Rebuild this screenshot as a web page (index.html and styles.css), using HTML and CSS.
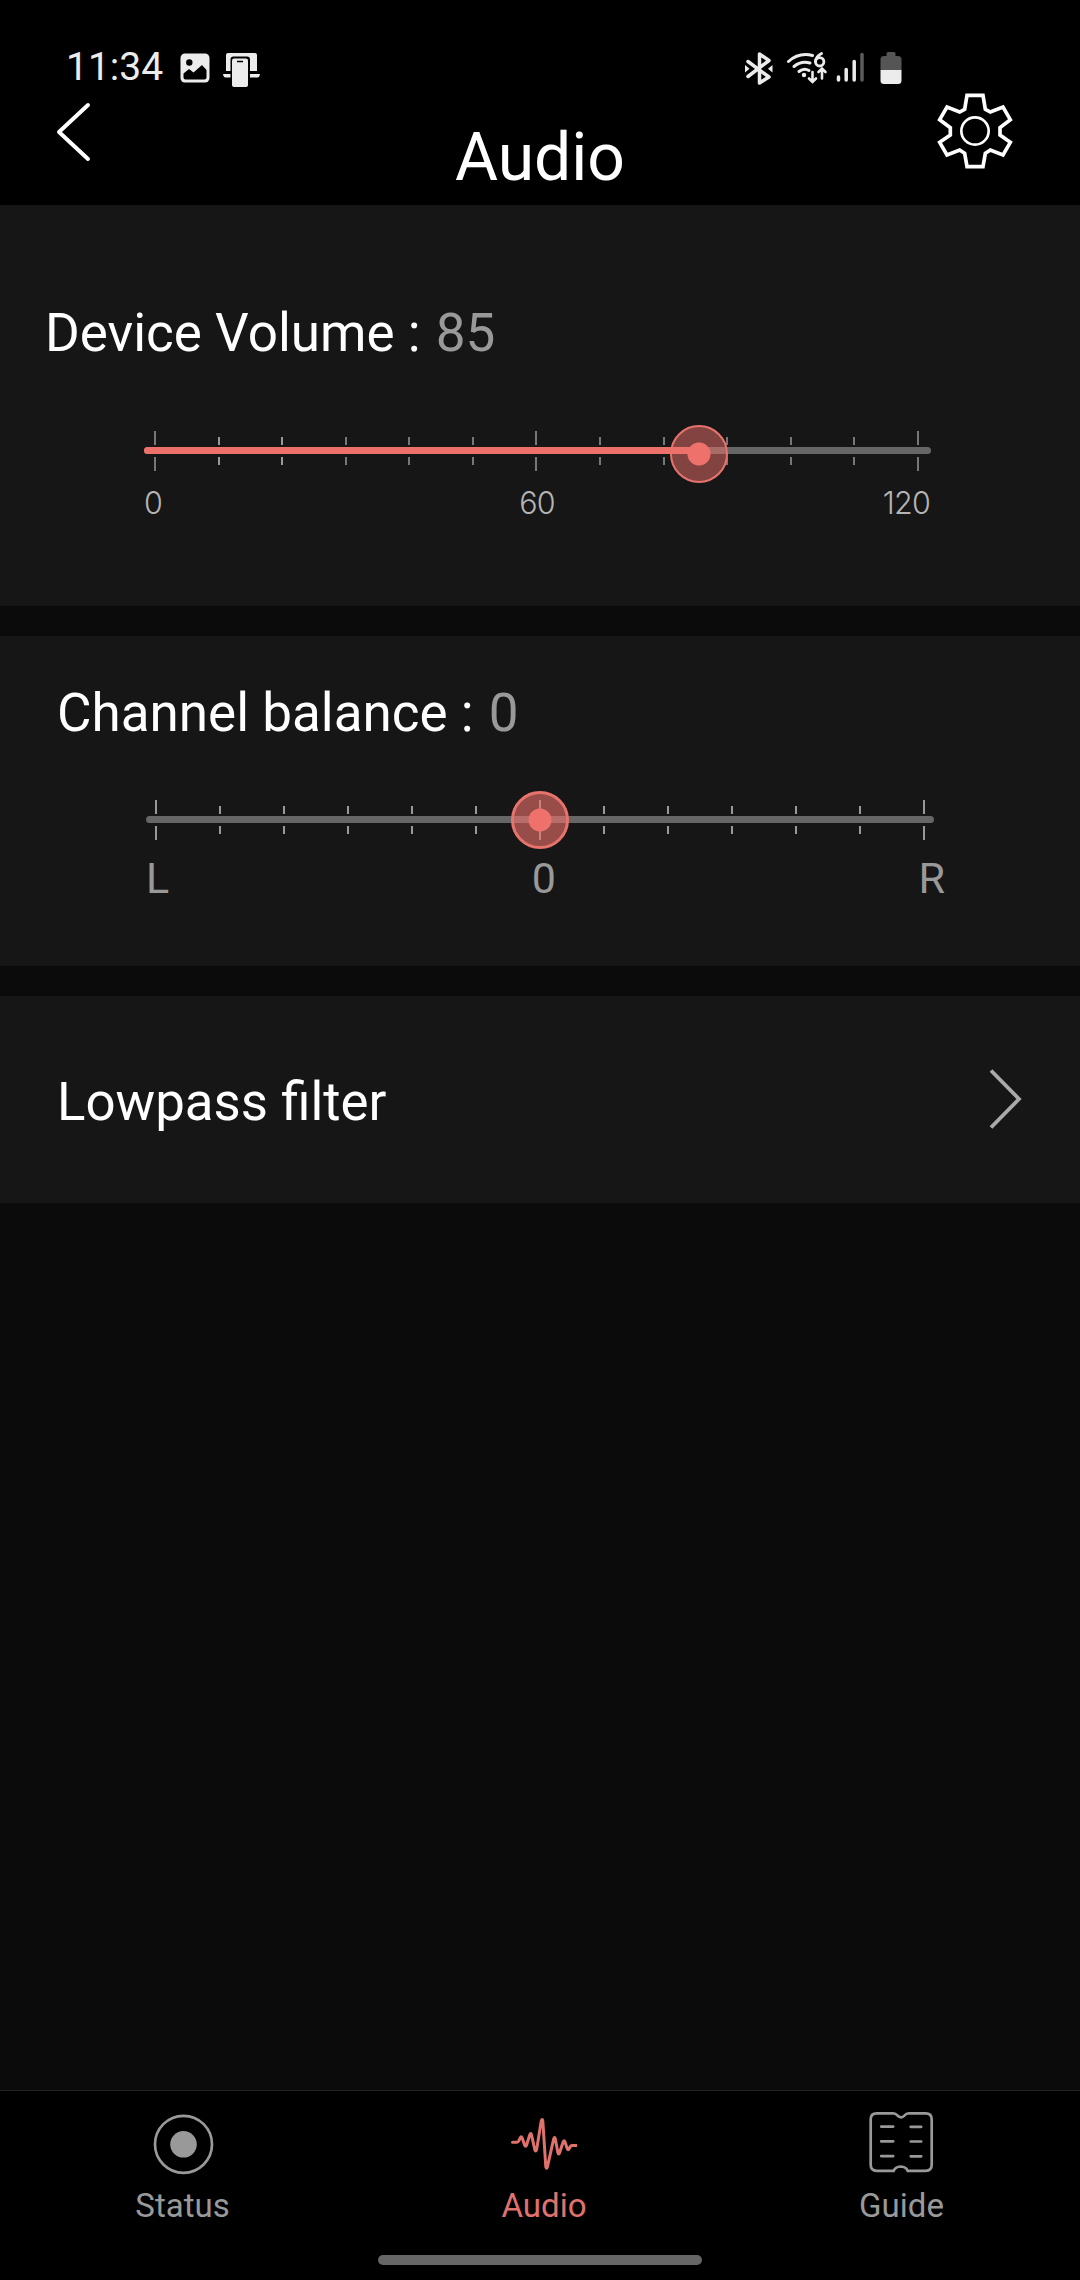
FILE: index.html
```html
<!DOCTYPE html>
<html lang="en">
<head>
    <meta charset="UTF-8">
    <meta name="viewport" content="width=device-width, initial-scale=1.0">
    <title>Audio</title>
    <link rel="stylesheet" href="styles.css">
</head>
<body>
    <header class="header">
        <div class="status-bar">
            <span class="time">11:34</span>
            <svg class="icon-image" width="30" height="30" viewBox="0 0 30 30">
                <rect x="0.5" y="0.5" width="29" height="29" rx="4.5" fill="#ececec"/>
                <circle cx="9.3" cy="9.5" r="3.2" fill="#000"/>
                <path d="M3.5 20.5L9 16l4.500 3.500L22 12l4.500 5v7.500q0 2-2 2h-19q-2 0-2-2z" fill="#000"/>
            </svg>
            <svg class="icon-link" width="38" height="36" viewBox="0 0 38 36">
                <path d="M3 19V3q0-2 2-2h27q2 0 2 2v16h-8V6H9v13z" fill="#ececec"/>
                <path d="M0 22h9v3.500H2.500q-2 0-2.500-3.500zM27 22h10q-.5 3.500-2.500 3.500H27z" fill="#ececec"/>
                <rect x="7.500" y="4.500" width="19.500" height="31.500" rx="3" fill="#000"/>
                <rect x="9" y="6.500" width="16" height="28.500" rx="2" fill="#ececec"/>
                <path d="M14 9.500h6" stroke="#000" stroke-width="1.500"/>
            </svg>
            <div class="signals">
                <svg width="30" height="34" viewBox="0 0 30 34">
                    <path d="M4 9.500L25 25 15.500 31V2L25 8.500 4 24.500" fill="none" stroke="#ececec" stroke-width="3.500" stroke-linejoin="round" stroke-linecap="round"/>
                    <path d="M1 13L5.500 16.800 1 20.500zM28.500 13L24 16.800l4.500 3.700z" fill="#ececec"/>
                </svg>
                <svg class="icon-wifi" width="42" height="34" viewBox="0 0 42 34">
                    <g fill="none" stroke="#ececec" stroke-width="3" stroke-linecap="round">
                        <path d="M2.500 9.500Q13 0 26.500 3.500"/>
                        <path d="M8 14.500Q15 8.500 24 11"/>
                        <path d="M13 19.500q5-4 10-1"/>
                        <path d="M26.500 20v9.500M23 26.500l3.500 3.500 3.500-3.500M36 26.500V17M32.500 20l3.500-3.500L39.500 20" stroke-width="2.600"/>
                        <path d="M35.500 1.500q-6 3-6 8.500" stroke-width="2.800"/>
                        <circle cx="33.700" cy="9.800" r="4.200" stroke-width="2.800"/>
                    </g>
                    <circle cx="18" cy="23" r="2.200" fill="#ececec"/>
                </svg>
                <svg class="icon-cell" width="30" height="34" viewBox="0 0 30 34" fill="none" stroke="#ececec" stroke-width="3.500" stroke-linecap="round">
                    <path d="M2.500 25v3M10.200 17.500v10.500M18.200 9.500v18.500"/>
                    <path d="M26 2.500v25.500" stroke="#5c5c5c"/>
                </svg>
                <svg class="icon-battery" width="22" height="34" viewBox="0 0 22 34">
                    <path d="M6.500 1.500q0-1.500 1.500-1.500h6q1.500 0 1.500 1.500V4H18q3.500 0 3.500 3.500V18H.5V7.500Q.5 4 4 4h2.500z" fill="#555"/>
                    <path d="M.5 18h21v10.500q0 3.500-3.500 3.500H4q-3.500 0-3.500-3.500z" fill="#ececec"/>
                </svg>
            </div>
        </div>
        <div class="title-bar">
            <svg class="back" width="36" height="60" viewBox="0 0 36 60">
                <path d="M32 3L3 30l29 27" fill="none" stroke="#fff" stroke-width="4" stroke-linecap="round" stroke-linejoin="round"/>
            </svg>
            <h1 class="title">Audio</h1>
            <svg class="gear" width="76" height="76" viewBox="0 0 228 228" fill="none" stroke="#fff">
                <path stroke-width="11" d="M90 7h48l7 42 15 8 38-15 22 38-31 24v22l31 22-22 38-38-15-15 10-7 40H90l-7-40-15-10-38 15-22-38 32-22v-22L8 80l22-38 38 15 15-8z"/>
                <circle cx="114" cy="114" r="41" stroke-width="8"/>
            </svg>
        </div>
    </header>

    <main class="content">
        <section class="card card-volume">
            <h2 class="label">Device Volume : <span class="value">85</span></h2>
            <div class="slider slider-volume">
                <div class="ticks">
                    <i class="tick tick-long"></i><i class="tick light"></i><i class="tick light"></i><i class="tick"></i><i class="tick"></i><i class="tick"></i>
                    <i class="tick tick-long"></i><i class="tick"></i><i class="tick"></i><i class="tick"></i><i class="tick"></i><i class="tick"></i><i class="tick tick-long"></i>
                </div>
                <div class="track"><div class="fill" style="width: 70.500%"></div></div>
                <div class="thumb" style="left: 70.500%"></div>
            </div>
            <div class="scale scale-volume">
                <span>0</span><span>60</span><span>120</span>
            </div>
        </section>

        <section class="card card-balance">
            <h2 class="label">Channel balance : <span class="value">0</span></h2>
            <div class="slider slider-balance">
                <div class="ticks">
                    <i class="tick tick-long"></i><i class="tick"></i><i class="tick"></i><i class="tick"></i><i class="tick"></i><i class="tick"></i>
                    <i class="tick tick-long"></i><i class="tick"></i><i class="tick"></i><i class="tick"></i><i class="tick"></i><i class="tick"></i><i class="tick tick-long"></i>
                </div>
                <div class="track"></div>
                <div class="thumb" style="left: 50%"></div>
            </div>
            <div class="scale scale-balance">
                <span>L</span><span>0</span><span>R</span>
            </div>
        </section>

        <section class="card card-filter">
            <h2 class="label">Lowpass filter</h2>
            <svg class="chevron" width="34" height="62" viewBox="0 0 34 62">
                <path d="M2 2.500l28 28.500L2 59.500" fill="none" stroke="#aaa" stroke-width="3.800"/>
            </svg>
        </section>
    </main>

    <nav class="nav">
        <a class="nav-item">
            <svg width="66" height="64" viewBox="0 0 66 64">
                <circle cx="33.500" cy="33.300" r="28.500" fill="none" stroke="#999" stroke-width="2.700"/>
                <circle cx="33.500" cy="33.300" r="13.300" fill="#999"/>
            </svg>
            <span>Status</span>
        </a>
        <a class="nav-item active">
            <svg width="66" height="64" viewBox="0 0 66 64">
                <path transform="translate(0 .8)" d="M1.500 30.500H6q1.200 0 1.800-1.500l1.400-3q1-2 1.900 0l2.600 7.500q1 2 1.800 0l3.300-10.500q1-2.500 1.700 0l3.300 15q.8 2.500 1.800 0L30.300 9q1-2.500 1.500 0L34.800 55q.8 3 1.600 0l6.300-28q1-2.500 1.600 0l2.600 14q.8 2.500 1.700 0l3.600-11q1-2 1.700 0l2.400 7q.8 2 1.800 0l1-2q.8-1.300 2-1.300h4.400" fill="none" stroke="#e0726d" stroke-width="3" stroke-linecap="round" stroke-linejoin="round"/>
            </svg>
            <span>Audio</span>
        </a>
        <a class="nav-item">
            <svg width="66" height="64" viewBox="0 0 66 64">
                <g transform="translate(-.8 .8)" fill="none" stroke="#999" stroke-width="2.700" stroke-linecap="round">
                    <path d="M8.500 1.500H25q2.500 0 4 2 3.800 4 7.500 0 1.500-2 4-2h17q6 0 6 6v45.500q0 6-6 6H39.500q-1.500-4-7-4.300-5.500.3-7 4.300h-17q-6 0-6-6V7.500q0-6 6-6z"/>
                    <path d="M13 14.800h12M42.500 15h10.500M13 29.500h12M42.500 29.700h10.500M13 44.300h12M42.500 44.500h10.500"/>
                </g>
            </svg>
            <span>Guide</span>
        </a>
        <div class="home-bar"></div>
    </nav>
</body>
</html>
```
FILE: styles.css
```css
* {
    margin: 0;
    padding: 0;
    box-sizing: border-box;
}

body {
    font-family: Roboto, sans-serif;
    background: #0b0b0b;
    color: #fff;
    width: 1080px;
    height: 2280px;
    display: flex;
    flex-direction: column;
    overflow: hidden;
}

svg {
    display: block;
    flex-shrink: 0;
}

/* header */
.header {
    background: #000;
    height: 205px;
    flex-shrink: 0;
}

.status-bar {
    display: flex;
    align-items: flex-start;
    height: 93px;
    padding: 52px 178px 0 66px;
}

.time {
    width: 114px;
    margin-top: -8px;
    font-size: 39px;
    line-height: 47px;
    color: #ececec;
}

.icon-image {
    margin-top: 1px;
}

.icon-link {
    margin-left: 13px;
}

.signals {
    display: flex;
    margin-left: auto;
}

.icon-wifi {
    margin-left: 12px;
}

.icon-cell {
    margin-left: 8px;
}

.icon-battery {
    margin-left: 14px;
}

.title-bar {
    display: grid;
    grid-template-columns: 96px 1fr 96px;
    padding: 0 48px 0 56px;
    height: 112px;
}

.back {
    margin-top: 9px;
}

.title {
    margin-top: 26px;
    margin-left: -8px;
    font-size: 66px;
    line-height: 77px;
    font-weight: 400;
    text-align: center;
}

.gear {
    margin-left: 1px;
}

/* cards */
.content {
    display: flex;
    flex-direction: column;
    gap: 30px;
    flex: 1;
}

.card {
    background: #161616;
    padding-left: 57px;
}

.label {
    font-size: 53px;
    line-height: 62px;
    font-weight: 400;
    white-space: nowrap;
}

.value {
    margin-left: 2px;
    color: #999;
}

.card-volume {
    height: 401px;
    padding-top: 97px;
    padding-left: 45px;
}

.card-balance {
    height: 330px;
    padding-top: 46px;
}

.card-filter {
    height: 207px;
    padding: 75px 57px 0 57px;
    display: flex;
    justify-content: space-between;
}

.card-filter .label {
    font-size: 52.800px;
}

.chevron {
    margin-top: -3px;
}

/* sliders */
.slider {
    position: relative;
    width: 788px;
    height: 40px;
    display: grid;
    align-items: center;
}

.slider > .ticks,
.slider > .track {
    grid-area: 1 / 1;
}

.slider-volume {
    width: 787px;
    margin: 67px 0 0 99px;
}

.slider-balance {
    margin: 56px 0 0 89px;
}

.ticks {
    display: flex;
    align-items: center;
    justify-content: space-between;
    height: 40px;
    padding: 0 12px 0 10px;
}

.slider-balance .ticks {
    padding: 0 9px;
}

.tick {
    width: 2px;
    height: 28px;
    background: linear-gradient(#777 8px, transparent 8px, transparent 20px, #777 20px);
}

.tick.light,
.slider-balance .tick {
    background: linear-gradient(#999 8px, transparent 8px, transparent 20px, #999 20px);
}

.tick.tick-long,
.slider-balance .tick-long {
    height: 40px;
    background: linear-gradient(#777 14px, transparent 14px, transparent 26px, #777 26px);
}

.slider-balance .tick.tick-long {
    background: linear-gradient(#999 14px, transparent 14px, transparent 26px, #999 26px);
}

.track {
    height: 7px;
    margin-top: -1px;
    border-radius: 4px;
    background: #666;
}

.fill {
    height: 7px;
    border-radius: 4px 0 0 4px;
    background: #ec716b;
}

.thumb {
    position: absolute;
    top: 50%;
    width: 58px;
    height: 58px;
    transform: translate(-50%, -50%);
    border: 3px solid #e8736d;
    border-radius: 50%;
    background: radial-gradient(circle, #ee716b 11px, rgba(238, 113, 107, 0.6) 12px);
}

.slider-volume .thumb {
    top: 22.500px;
    border-width: 2px;
    background: radial-gradient(circle, #ee716b 11px, rgba(238, 113, 107, 0.5) 12px);
}

.scale {
    display: flex;
    justify-content: space-between;
}

.scale-volume {
    display: grid;
    grid-template-columns: 1fr 60px 1fr;
    margin: 14px 0 0 99px;
    width: 786px;
    font-family: Inter, sans-serif;
    font-weight: 300;
    font-size: 30.500px;
    line-height: 36px;
    letter-spacing: -0.800px;
    color: #b4b4b4;
}

.scale-volume span:nth-child(2) {
    text-align: center;
}

.scale-volume span:last-child {
    text-align: right;
}

.scale-balance {
    margin: 13px 0 0 89px;
    width: 799px;
    font-size: 43px;
    line-height: 50px;
    color: #999;
}

/* bottom navigation */
.nav {
    position: relative;
    display: grid;
    grid-template-columns: 365px 358px 357px;
    height: 190px;
    flex-shrink: 0;
    padding-top: 20px;
    background: #000;
    border-top: 1px solid #222;
}

.nav-item {
    display: flex;
    flex-direction: column;
    align-items: center;
    font-size: 33px;
    line-height: 39px;
    gap: 11px;
    color: #999;
}

.nav-item.active {
    color: #e0726d;
}

.home-bar {
    position: absolute;
    left: 378px;
    bottom: 15px;
    width: 324px;
    height: 10px;
    border-radius: 5px;
    background: #666;
}
```
